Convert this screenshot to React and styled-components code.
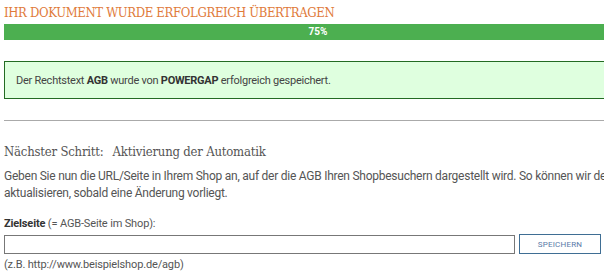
import styled, { createGlobalStyle } from "styled-components";

const Global = createGlobalStyle`
html, body {
  margin: 0;
  padding: 0;
  background: #fff;
  overflow: hidden;
}
body {
  font-family: Roboto, "Liberation Sans", Arial, sans-serif;
  color: #555;
}
`

const Page = styled.div`
width: 680px;
padding: 5px 0 0 4px;
`
const Title = styled.h2`
margin: 0;
font-family: "DejaVu Serif Condensed", "DejaVu Serif", serif;
font-stretch: condensed;
font-weight: normal;
font-size: 13px;
line-height: 16px;
color: #e07a3a;
letter-spacing: -0.35px;
`
const Progress = styled.div`
margin-top: 3px;
width: 628px;
height: 16px;
background: #e9e9e9;
`
const Bar = styled.div`
height: 100%;
background: #4caf50;
color: #fff;
font-size: 10px;
font-weight: bold;
line-height: 16px;
text-align: center;
`
const Message = styled.div`
margin-top: 21px;
height: 36px;
padding: 0 11px;
display: flex;
align-items: center;
background: #dfffdf;
border: 1px solid #236b23;
font-size: 11px;
letter-spacing: -0.25px;
color: #444;
b { color: #333; }
`
const Rule = styled.hr`
margin: 21px 0 0 0;
border: 0;
border-top: 1px solid #aaa;
`
const StepTitle = styled.h3`
margin: 23px 0 0 0;
font-family: "DejaVu Serif Condensed", "DejaVu Serif", serif;
font-stretch: condensed;
font-weight: normal;
font-size: 13px;
line-height: 16px;
color: #555;
letter-spacing: -0.2px;
`
const StepLabel = styled.span`
margin-right: 9px;
`
const Text = styled.p`
margin: 8px 0 0 0;
width: 800px;
font-size: 12px;
line-height: 17px;
letter-spacing: -0.25px;
color: #555;
`
const Label = styled.div`
margin-top: 15px;
font-size: 11px;
line-height: 14px;
letter-spacing: -0.15px;
color: #555;
b { color: #333; }
`
const Row = styled.div`
margin-top: 4px;
width: 597px;
display: flex;
gap: 4px;
`
const Input = styled.input`
flex: 1;
height: 19px;
box-sizing: border-box;
border: 1px solid #777;
margin: 0;
padding: 0 4px;
`
const Button = styled.button`
width: 82px;
height: 20px;
margin-top: -1px;
background: #fff;
border: 1px solid #3f6e94;
color: #5a7aa8;
font-family: Roboto, "Liberation Sans", Arial, sans-serif;
font-size: 8px;
letter-spacing: 0.2px;
`
const Hint = styled.div`
margin-top: 4px;
font-size: 11px;
line-height: 14px;
letter-spacing: -0.15px;
color: #555;
`

export default function App() {
  return (
    <>
      <Global />
      <Page>
        <Title>IHR DOKUMENT WURDE ERFOLGREICH ÜBERTRAGEN</Title>
        <Progress>
          <Bar style={{ width: "100%" }}>75%</Bar>
        </Progress>
        <Message>
          <span>Der Rechtstext <b>AGB</b> wurde von <b>POWERGAP</b> erfolgreich gespeichert.</span>
        </Message>
        <Rule />
        <StepTitle>
          <StepLabel>Nächster Schritt:</StepLabel>Aktivierung der Automatik
        </StepTitle>
        <Text>
          Geben Sie nun die URL/Seite in Ihrem Shop an, auf der die AGB Ihren Shopbesuchern dargestellt wird. So können wir den Text automatisch
          <br />
          aktualisieren, sobald eine Änderung vorliegt.
        </Text>
        <Label><b>Zielseite</b> (= AGB-Seite im Shop):</Label>
        <Row>
          <Input type="text" />
          <Button>SPEICHERN</Button>
        </Row>
        <Hint>(z.B. http://www.beispielshop.de/agb)</Hint>
      </Page>
    </>
  );
}
